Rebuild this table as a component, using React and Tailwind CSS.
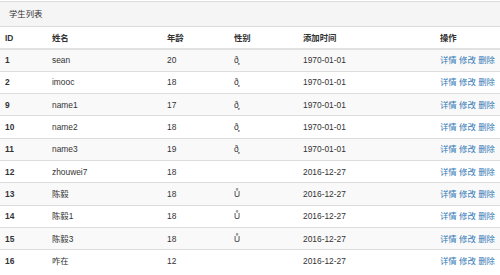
const students = [
  { id: 1, name: 'sean', age: 20, sex: 'ð̧', date: '1970-01-01' },
  { id: 2, name: 'imooc', age: 18, sex: 'ð̧', date: '1970-01-01' },
  { id: 9, name: 'name1', age: 17, sex: 'ð̧', date: '1970-01-01' },
  { id: 10, name: 'name2', age: 18, sex: 'ð̧', date: '1970-01-01' },
  { id: 11, name: 'name3', age: 19, sex: 'ð̧', date: '1970-01-01' },
  { id: 12, name: 'zhouwei7', age: 18, sex: '', date: '2016-12-27' },
  { id: 13, name: '陈毅', age: 18, sex: 'Ů', date: '2016-12-27' },
  { id: 14, name: '陈毅1', age: 18, sex: 'Ů', date: '2016-12-27' },
  { id: 15, name: '陈毅3', age: 18, sex: 'Ů', date: '2016-12-27' },
  { id: 16, name: '咋在', age: 12, sex: '', date: '2016-12-27' },
]

function Actions() {
  return (
    <span className="text-[#337ab7]">
      <a href="#">详情</a> <a href="#">修改</a> <a href="#">删除</a>
    </span>
  )
}

export default function App() {
  return (
    <div className="w-[500px] h-[275px] overflow-hidden bg-white font-['Liberation_Sans','Noto_Sans_CJK_SC',sans-serif] text-[8.4px] leading-[12px] text-[#333]">
      <div className="mt-px flex h-[26px] items-center border-y border-[#ddd] bg-[#f5f5f5] px-[9px]">
        学生列表
      </div>
      <table className="w-full table-fixed border-collapse text-left">
        <colgroup>
          <col className="w-[47px]" />
          <col className="w-[115px]" />
          <col className="w-[67px]" />
          <col className="w-[69px]" />
          <col className="w-[137px]" />
          <col />
        </colgroup>
        <thead>
          <tr className="h-[22px] border-b-2 border-[#e2e2e2]">
            <th className="px-[5px] font-bold">ID</th>
            <th className="px-[5px] font-bold">姓名</th>
            <th className="px-[5px] font-bold">年龄</th>
            <th className="px-[5px] font-bold">性别</th>
            <th className="px-[5px] font-bold">添加时间</th>
            <th className="px-[5px] font-bold">操作</th>
          </tr>
        </thead>
        <tbody>
          {students.map((s, i) => (
            <tr
              key={s.id}
              className={`h-[22.3px] border-t border-[#ddd] ${i % 2 === 0 ? 'bg-[#f9f9f9]' : 'bg-white'}`}
            >
              <td className="px-[5px] font-bold">{s.id}</td>
              <td className="px-[5px]">{s.name}</td>
              <td className="px-[5px]">{s.age}</td>
              <td className="px-[5px]">{s.sex}</td>
              <td className="px-[5px]">{s.date}</td>
              <td className="px-[5px] whitespace-nowrap">
                <Actions />
              </td>
            </tr>
          ))}
        </tbody>
      </table>
    </div>
  )
}
